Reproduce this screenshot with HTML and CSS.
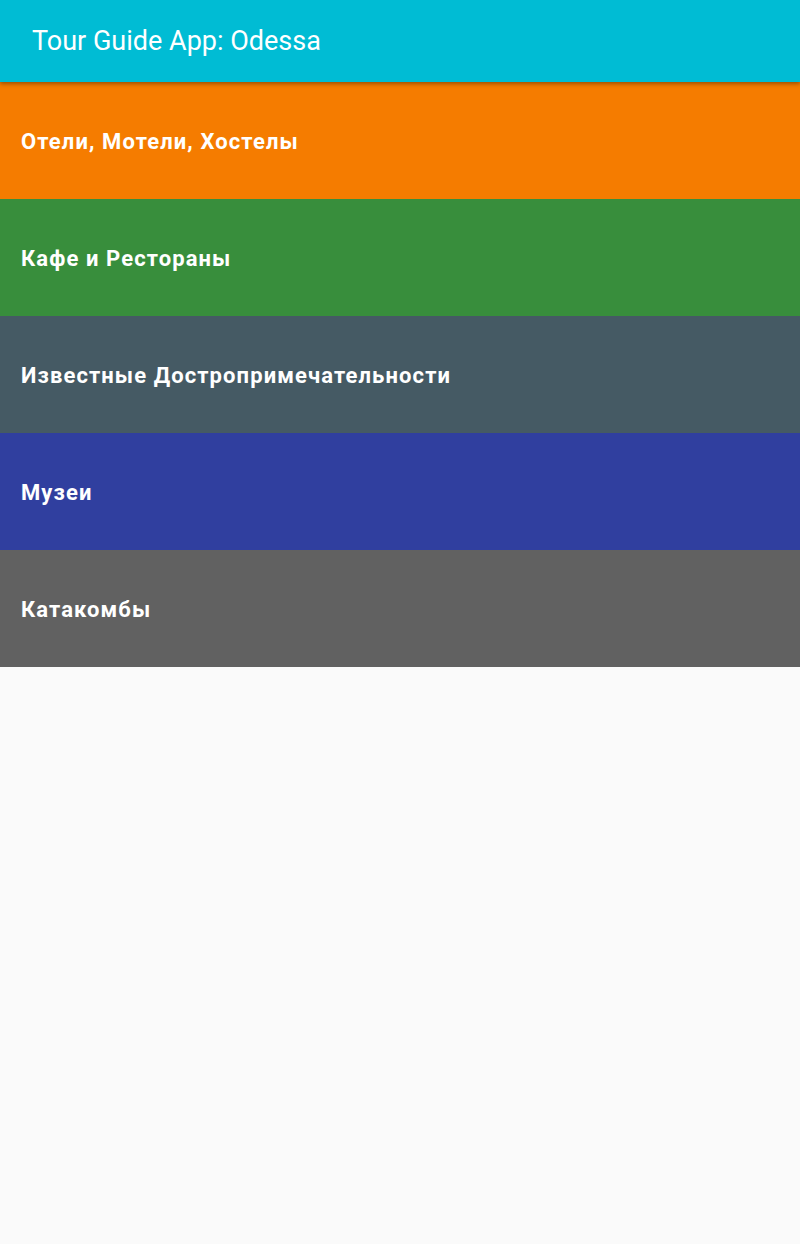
FILE: index.html
```html
<!DOCTYPE html>
<html lang="ru">
<head>
<meta charset="utf-8">
<title>Tour Guide App: Odessa</title>
<link rel="stylesheet" href="styles.css">
</head>
<body>
<header class="appbar"><h1 class="title">Tour Guide App: Odessa</h1></header>
<ul class="list">
  <li class="item orange">Отели, Мотели, Хостелы</li>
  <li class="item green">Кафе и Рестораны</li>
  <li class="item bluegrey">Известные Достропримечательности</li>
  <li class="item indigo">Музеи</li>
  <li class="item grey">Катакомбы</li>
</ul>
</body>
</html>
```
FILE: styles.css
```css
html, body { margin: 0; padding: 0; }
body {
  background: #fafafa;
  font-family: Roboto, "Noto Sans", sans-serif;
  width: 800px;
  min-height: 1244px;
}
.appbar {
  position: relative;
  z-index: 2;
  height: 82px;
  box-sizing: border-box;
  background: #00bcd4;
  display: flex;
  align-items: center;
  padding-left: 32px;
  box-shadow: 0 2px 4px rgba(0,0,0,0.35);
}
.title {
  margin: 0;
  color: #fff;
  font-size: 27px;
  font-weight: 400;
  line-height: 1;
}
.list { list-style: none; margin: 0; padding: 0; }
.item {
  height: 117px;
  box-sizing: border-box;
  padding-top: 2px;
  display: flex;
  align-items: center;
  padding-left: 21px;
  color: #fff;
  font-size: 22px;
  letter-spacing: 1.1px;
  font-weight: 700;
}
.orange { background: #f57c00; }
.green { background: #388e3c; }
.bluegrey { background: #455a64; }
.indigo { background: #303f9f; }
.grey { background: #616161; }
```
